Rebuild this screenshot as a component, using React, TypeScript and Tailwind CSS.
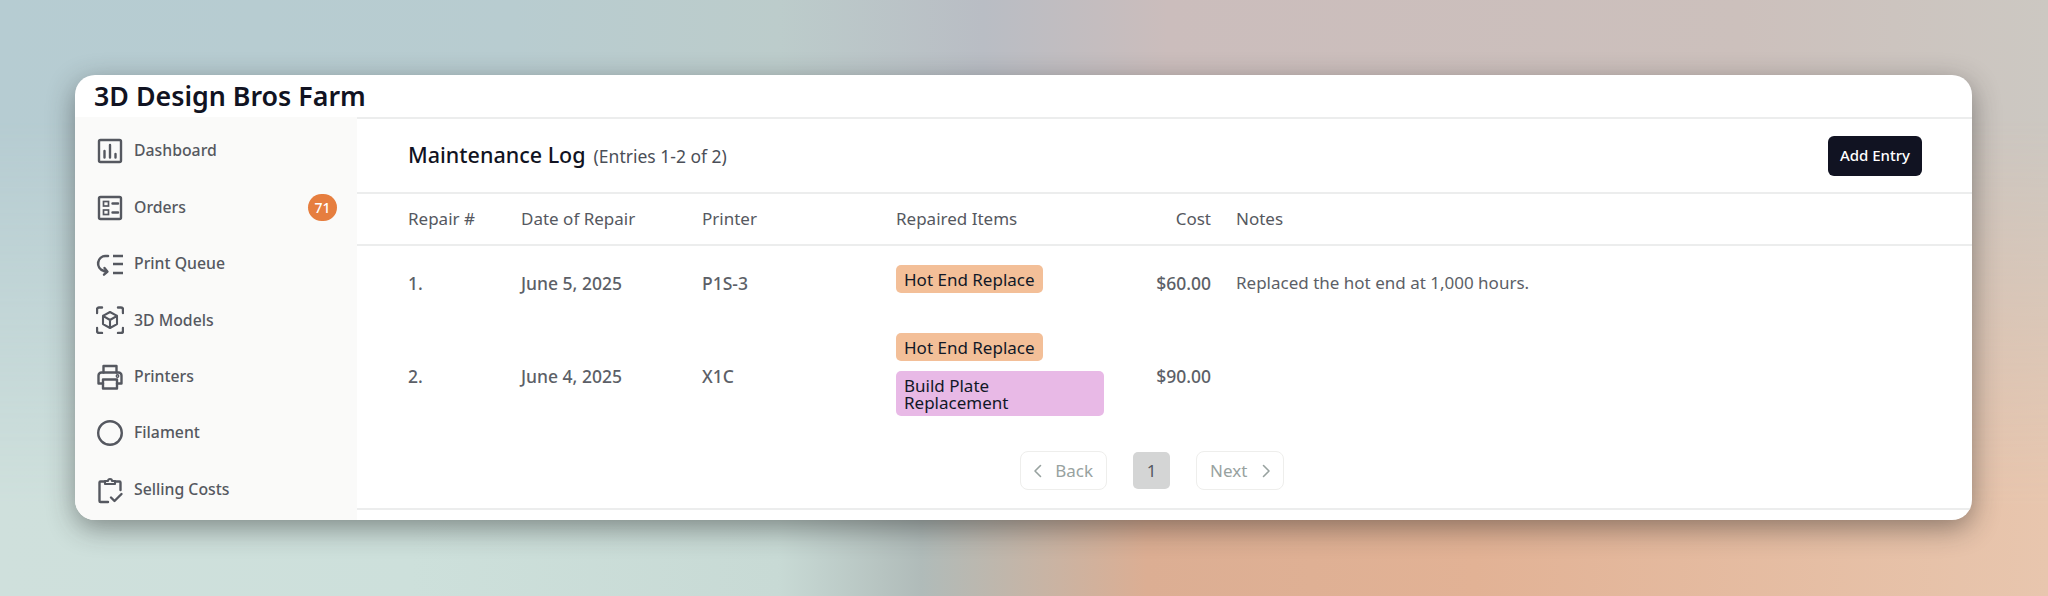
import React from "react";

const uiFont = "font-['Noto_Sans','Open_Sans',sans-serif]";
const gridCols = "grid-cols-[113px_181px_194px_245px_70px_1fr]";

function Icon({ children }: { children: React.ReactNode }) {
  return (
    <svg viewBox="0 0 28 28" fill="none" stroke="currentColor" strokeWidth="2.4" strokeLinecap="round" strokeLinejoin="round" className="h-[28px] w-[28px] shrink-0">
      {children}
    </svg>
  );
}

const navItems: { label: string; badge?: string; icon: React.ReactNode }[] = [
  {
    label: "Dashboard",
    icon: (
      <>
        <rect x="3" y="3" width="22" height="22" rx="1.5" />
        <path d="M8.500 14v6.500M14 8v12.500M19.500 17v3.500" />
      </>
    ),
  },
  {
    label: "Orders",
    badge: "71",
    icon: (
      <>
        <rect x="3" y="3" width="22" height="22" rx="1.5" />
        <rect x="7.500" y="7.500" width="5" height="4.500" strokeWidth="1.700" strokeLinejoin="miter" />
        <rect x="7.500" y="16" width="5" height="4.500" strokeWidth="1.700" strokeLinejoin="miter" />
        <path d="M16.500 9.500h5.500M16.500 18.500h5.500" />
      </>
    ),
  },
  {
    label: "Print Queue",
    icon: (
      <>
        <path d="M12 6H9.500a7.500 7.500 0 0 0-2 14.700L10.500 22" strokeWidth="2.600" />
        <path d="M8.500 18l3 3.700-3.500 3" />
        <path d="M17 6h10M17 14h10M17 23h10" strokeLinecap="butt" strokeWidth="2.600" />
      </>
    ),
  },
  {
    label: "3D Models",
    icon: (
      <>
        <path d="M1 7V3.500A2 2 0 0 1 3 1.500h3M22 1.500h3a2 2 0 0 1 2 2V7M27 22v3a2 2 0 0 1-2 2h-3M6 27H3a2 2 0 0 1-2-2v-3" />
        <path d="M14 6l7 3.900v8.200L14 22l-7-3.900V9.900zM7 9.900l7 4.100 7-4.100M14 14v8" strokeWidth="2.100" />
      </>
    ),
  },
  {
    label: "Printers",
    icon: (
      <>
        <path d="M7.500 9.500V3h13v6.500" />
        <path d="M7 20.500H2.500V12.500a3 3 0 0 1 3-3h17a3 3 0 0 1 3 3v8H21" />
        <rect x="7" y="16.500" width="14" height="9" />
        <circle cx="21.500" cy="13" r="0.700" />
      </>
    ),
  },
  {
    label: "Filament",
    icon: <circle cx="14" cy="14" r="11.800" />,
  },
  {
    label: "Selling Costs",
    icon: (
      <>
        <path d="M9 5.500H4.500a1 1 0 0 0-1 1V25a1 1 0 0 0 1 1H12M19 5.500h4.500a1 1 0 0 1 1 1V14" />
        <path d="M9 8V5h3a2 2 0 0 1 4 0h3v3z" strokeWidth="2.100" />
        <path d="M15 21.500l3.500 3.500 7-7" />
      </>
    ),
  },
];

function Tag({ color, children }: { color: string; children: React.ReactNode }) {
  return <div className={`rounded-[5px] px-[8px] py-[5.500px] text-[17px] font-normal leading-[17px] text-[#111827] ${color}`}>{children}</div>;
}

export default function App() {
  return (
    <div className={`relative h-[596px] w-[2048px] overflow-hidden bg-[linear-gradient(90deg,#b6ccd2_0%,#b8ccd0_25%,#bccccb_38%,#b9bdc4_48%,#cbbdbc_57%,#ccc0bc_85%,#ccc8c2_100%)] pl-[75px] pt-[75px] ${uiFont}`}>
      <div className="absolute inset-0 bg-[linear-gradient(90deg,#cfe0dc_0%,#cde0db_20%,#c8dad5_38%,#b0bbb9_45%,#dcae93_56%,#e2b295_72%,#e8c6ae_100%)] [mask-image:linear-gradient(to_bottom,transparent_20%,black_85%)]" />
      <div className="relative flex h-[445px] w-[1897px] flex-col overflow-hidden rounded-[20px] bg-white shadow-[0_8px_28px_rgba(30,30,30,0.45)]">
        <div className="flex h-[42px] items-center pl-[19px] text-[26.800px] font-semibold text-[#111322]">3D Design Bros Farm</div>
        <div className="flex min-h-0 flex-1">
          <aside className="flex w-[282px] shrink-0 flex-col bg-[#fafaf9] pl-[21px] pr-[20px] pt-[6px] text-[#555860]">
            {navItems.map((item) => (
              <div key={item.label} className="flex h-[56.400px] shrink-0 items-center gap-[10px] text-[15.800px] font-medium">
                <Icon>{item.icon}</Icon>
                <span className="flex-1">{item.label}</span>
                {item.badge && (
                  <span className="flex h-[27px] w-[29px] items-center justify-center rounded-full bg-[#e67e3f] text-[14px] text-white">{item.badge}</span>
                )}
              </div>
            ))}
          </aside>
          <main className="flex min-w-0 flex-1 flex-col">
            <div className="flex h-[77px] shrink-0 items-center justify-between border-y-2 border-[#eceded] pl-[51px] pr-[50px]">
              <div className="flex items-baseline gap-[8px]">
                <span className="text-[21.500px] font-medium text-[#111322]">Maintenance Log</span>
                <span className="text-[17.500px] text-[#4b4f58]">(Entries 1-2 of 2)</span>
              </div>
              <button className="h-[40px] w-[94px] rounded-[6px] bg-[#111322] text-[15px] font-medium text-white">Add Entry</button>
            </div>
            <div className={`grid h-[52px] shrink-0 ${gridCols} items-center border-b-2 border-[#eceded] pl-[51px] text-[17px] text-[#555860]`}>
              <span>Repair #</span>
              <span>Date of Repair</span>
              <span>Printer</span>
              <span>Repaired Items</span>
              <span className="text-right">Cost</span>
              <span className="pl-[25px]">Notes</span>
            </div>
            <div className={`grid h-[74px] shrink-0 ${gridCols} items-center pl-[51px] text-[17.500px] font-medium text-[#5c5f67]`}>
              <span>1.</span>
              <span>June 5, 2025</span>
              <span>P1S-3</span>
              <div className="mb-[8px] w-fit">
                <Tag color="bg-[#f3bf98]">Hot End Replace</Tag>
              </div>
              <span className="text-right">$60.00</span>
              <span className="pl-[25px] text-[17px] font-normal">Replaced the hot end at 1,000 hours.</span>
            </div>
            <div className={`grid h-[113px] shrink-0 ${gridCols} items-center pl-[51px] text-[17.500px] font-medium text-[#5c5f67]`}>
              <span>2.</span>
              <span>June 4, 2025</span>
              <span>X1C</span>
              <div className="mb-[4px] flex w-[208px] flex-col items-start gap-[10px]">
                <Tag color="bg-[#f3bf98]">Hot End Replace</Tag>
                <div className="w-full rounded-[5px] bg-[#e8b9e6] pr-[40px]">
                  <Tag color="bg-transparent">Build Plate Replacement</Tag>
                </div>
              </div>
              <span className="text-right">$90.00</span>
              <span />
            </div>
            <div className="flex flex-1 items-start justify-center gap-[26px] border-b-2 border-[#eceded] pr-[25px] pt-[18px] text-[17px] text-[#98a2a0]">
              <div className="flex h-[39px] w-[87px] items-center justify-between rounded-[8px] border border-[#eeeeec] pl-[9px] pr-[13px]">
                <svg viewBox="0 0 16 16" fill="none" stroke="currentColor" strokeWidth="1.600" strokeLinecap="round" strokeLinejoin="round" className="h-[16px] w-[16px]">
                  <path d="M10.500 2.500L5 8l5.500 5.500" />
                </svg>
                <span>Back</span>
              </div>
              <div className="mt-px flex h-[37px] w-[37px] items-center justify-center rounded-[5px] bg-[#d4d5d5] text-[#555860]">1</div>
              <div className="flex h-[39px] w-[88px] items-center justify-between rounded-[8px] border border-[#eeeeec] pl-[13px] pr-[9px]">
                <span>Next</span>
                <svg viewBox="0 0 16 16" fill="none" stroke="currentColor" strokeWidth="1.600" strokeLinecap="round" strokeLinejoin="round" className="h-[16px] w-[16px]">
                  <path d="M5.500 2.500L11 8l-5.500 5.500" />
                </svg>
              </div>
            </div>
            <div className="h-[10px] shrink-0" />
          </main>
        </div>
      </div>
    </div>
  );
}
